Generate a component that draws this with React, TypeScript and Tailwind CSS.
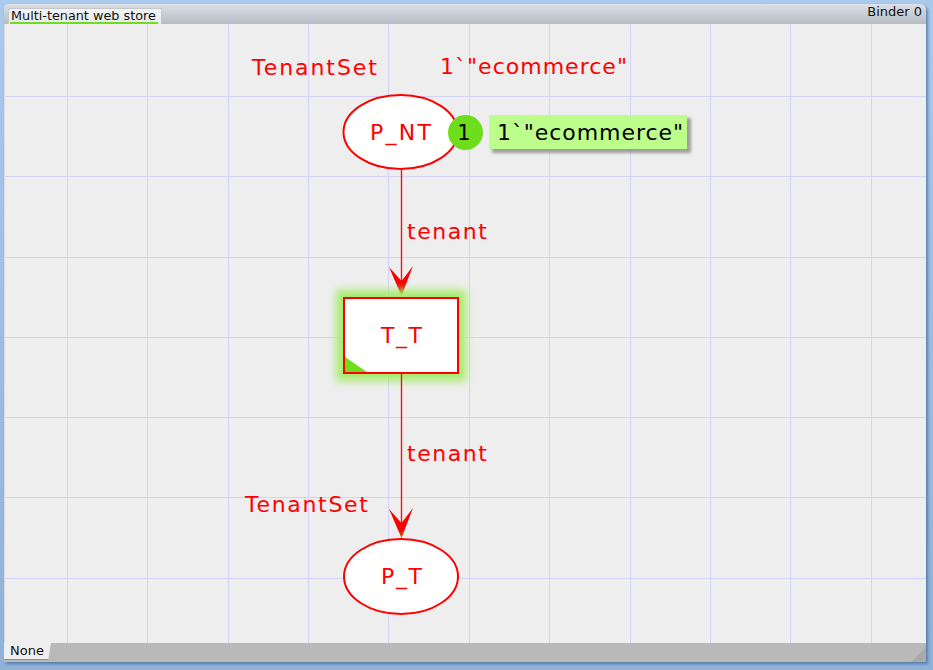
const font = '"DejaVu Sans", Verdana, sans-serif';

const gridX = [67, 147, 228, 308, 388, 469, 549, 630, 710, 790, 871];
const gridY = [96, 176, 257, 337, 417, 497, 578];

function Arrow({ tipY }: { tipY: number }) {
  // barbed arrow head, pointing down, tip at (401, tipY)
  const t = tipY;
  return (
    <path
      d={`M401.5,${t} L389,${t - 29} L401.5,${t - 15} L413,${t - 30} Z`}
      fill="url(#arrowGrad)"
    />
  );
}

function NetCanvas() {
  return (
    <svg
      width={921}
      height={619}
      viewBox="5 24 921 619"
      className="absolute inset-0"
      style={{ fontFamily: font }}
    >
      <defs>
        <linearGradient id="arrowGrad" x1="0" y1="0" x2="0" y2="1">
          <stop offset="0" stopColor="#ff0000" />
          <stop offset="0.7" stopColor="#f20000" />
          <stop offset="1" stopColor="#b86a00" />
        </linearGradient>
        <filter id="glow" x="-30%" y="-30%" width="160%" height="160%">
          <feGaussianBlur stdDeviation="4" />
        </filter>
        <filter id="shadow" x="-10%" y="-30%" width="130%" height="180%">
          <feGaussianBlur stdDeviation="1.5" />
        </filter>
      </defs>

      {gridX.map((x) => (
        <rect key={"x" + x} x={x} y={24} width={1} height={619} fill="#d2d2fa" />
      ))}
      {gridY.map((y) => (
        <rect key={"y" + y} x={5} y={y} width={921} height={1} fill="#d2d2fa" />
      ))}

      {/* labels */}
      <text x={252} y={75} fontSize={22} fill="#ff0000" textLength={125} lengthAdjust="spacing">
        TenantSet
      </text>
      <text x={440} y={74} fontSize={22} fill="#ff0000" textLength={187} lengthAdjust="spacing">
        1`"ecommerce"
      </text>

      {/* P_NT place */}
      <ellipse cx={400.5} cy={132} rx={57} ry={37} fill="#ffffff" stroke="#ff0000" strokeWidth={2} />
      <text x={370} y={140} fontSize={22} fill="#ff0000" textLength={61} lengthAdjust="spacing">
        P_NT
      </text>

      {/* marking */}
      <rect x={492} y={118} width={199} height={35} fill="#7d7d7d" opacity={0.7} filter="url(#shadow)" />
      <rect x={489} y={115} width={198} height={34} fill="#bcfd8c" />
      <text x={497} y={140} fontSize={22} fill="#000000" textLength={186} lengthAdjust="spacing">
        1`"ecommerce"
      </text>
      <circle cx={465.5} cy={132.5} r={17.5} fill="#6edd1c" />
      <text x={464} y={140} fontSize={21} fill="#000000" textAnchor="middle">
        1
      </text>

      {/* arc P_NT -> T_T */}
      <rect x={400.8} y={169} width={1.4} height={122} fill="#ff1010" />
      <Arrow tipY={296} />
      <text x={407} y={239} fontSize={22} fill="#ff0000" textLength={80} lengthAdjust="spacing">
        tenant
      </text>

      {/* T_T transition */}
      <rect x={336} y={290} width={130} height={91} fill="#a6ec6a" filter="url(#glow)" />
      <rect x={344} y={298} width={114} height={75} fill="#ffffff" stroke="#ff0000" strokeWidth={2} />
      <path d="M345,357 L367,372 L345,372 Z" fill="#6edd1c" />
      <text x={381} y={343} fontSize={22} fill="#ff0000" textLength={41} lengthAdjust="spacing">
        T_T
      </text>

      {/* arc T_T -> P_T */}
      <rect x={400.8} y={374} width={1.4} height={160} fill="#ff1010" />
      <Arrow tipY={538} />
      <text x={407} y={461} fontSize={22} fill="#ff0000" textLength={80} lengthAdjust="spacing">
        tenant
      </text>

      <text x={245} y={512} fontSize={22} fill="#ff0000" textLength={123} lengthAdjust="spacing">
        TenantSet
      </text>

      {/* P_T place */}
      <ellipse cx={401} cy={576.5} rx={57} ry={37.5} fill="#ffffff" stroke="#ff0000" strokeWidth={2} />
      <text x={381} y={584} fontSize={22} fill="#ff0000" textLength={41} lengthAdjust="spacing">
        P_T
      </text>
    </svg>
  );
}

export default function App() {
  return (
    <div
      className="w-[933px] h-[670px] bg-gradient-to-b from-[#a9c9ed] to-[#8fb2da] pt-1 pl-1 pr-[7px] pb-[8px]"
      style={{ fontFamily: font }}
    >
      <div className="w-full h-full flex flex-col rounded-tl-[4px] rounded-tr-[6px] overflow-hidden shadow-[2px_2px_3px_rgba(40,80,130,0.55)]">
        {/* tab bar */}
        <div className="h-[20px] flex items-end justify-between bg-gradient-to-b from-[#dde1e6] to-[#b5bcc5] pl-1 pr-1">
          <div className="h-[16px] w-[154px] pl-[2px] bg-gradient-to-b from-[#f3f4f5] to-[#e8eaec] rounded-tl-[3px] border-t border-l border-r border-[#c4c8cd] flex flex-col">
            <span className="text-[12.8px] leading-[13px] text-[#111] whitespace-nowrap">Multi-tenant web store</span>
            <span className="h-[2px] w-[148px] -ml-[1px] bg-[#6fdc1e]" />
          </div>
          <span className="self-start mt-[1px] text-[13px] leading-[14px] text-[#111]">Binder 0</span>
        </div>

        {/* canvas */}
        <div className="relative flex-1 bg-[#eeeeee] border-l border-[#dcdcdc] overflow-hidden">
          <NetCanvas />
        </div>

        {/* bottom bar */}
        <div className="relative h-[19px] bg-[#b9b9b9] flex items-start">
          <div className="h-[17px] w-[47px] bg-[#efefef] border-b border-[#8a8a8a] [clip-path:polygon(0_0,100%_0,94%_100%,0_100%)] pl-[6px]">
            <span className="block text-[13px] leading-[15px] text-[#111]">None</span>
          </div>
          <div className="absolute right-0 bottom-0 w-[15px] h-[15px] bg-[#a9a9a9] [clip-path:polygon(100%_0,100%_100%,0_100%)]" />
        </div>
      </div>
    </div>
  );
}
